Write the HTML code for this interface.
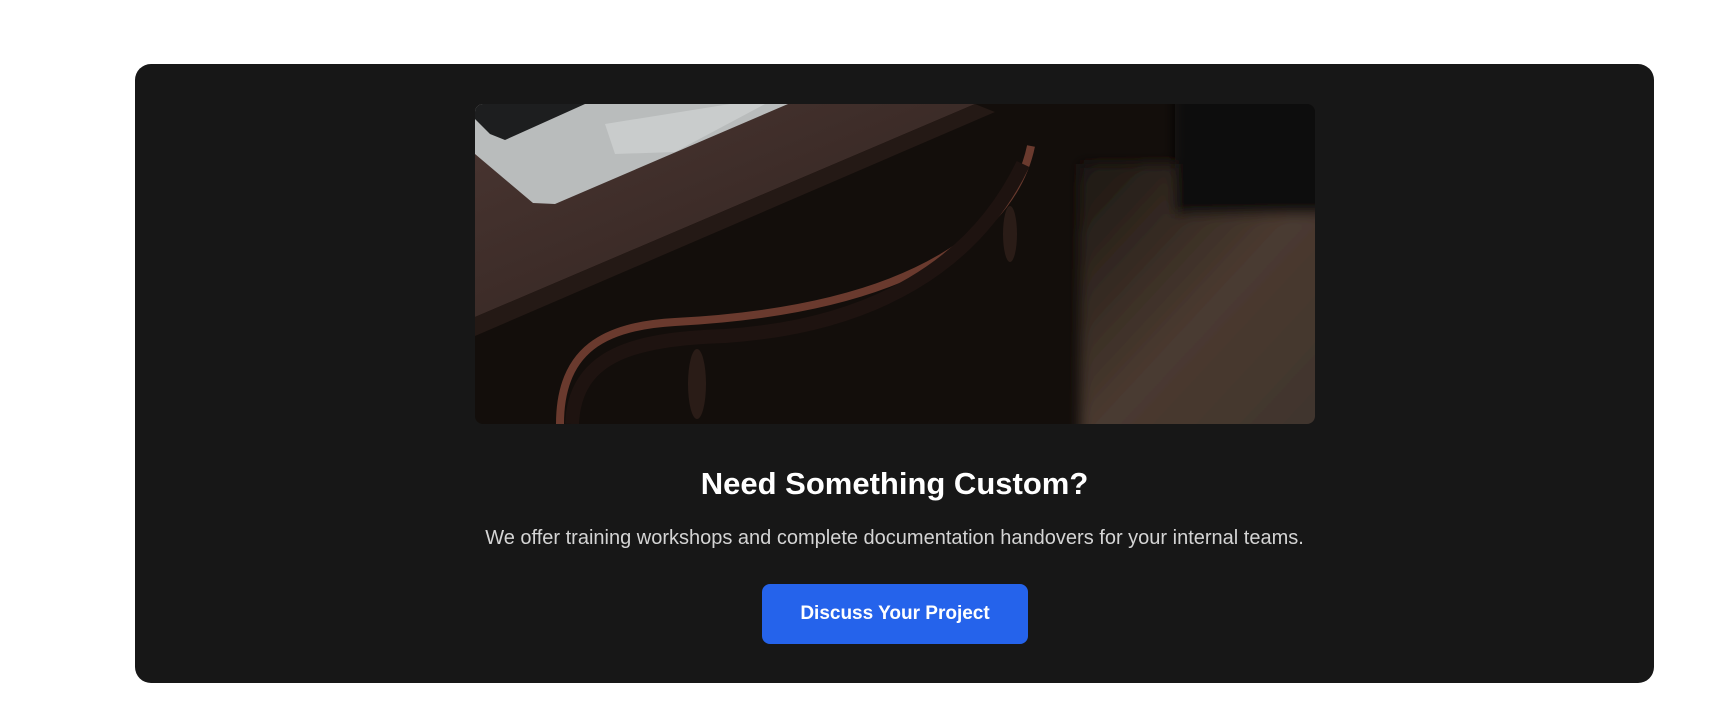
<!DOCTYPE html>
<html><head><meta charset="utf-8"><style>
html,body{margin:0;padding:0;background:#fff;width:1716px;height:702px;overflow:hidden;font-family:"Liberation Sans",sans-serif}
.card{position:absolute;left:135px;top:64px;width:1519px;height:619px;background:#171717;border-radius:16px}
.img{position:absolute;left:475px;top:104px;width:840px;height:320px;border-radius:8px;overflow:hidden}
h2{position:absolute;left:135px;width:1519px;top:466px;margin:0;text-align:center;color:#fff;font-size:31px;font-weight:bold;line-height:36px}
p{position:absolute;left:135px;width:1519px;top:526px;margin:0;text-align:center;color:#d4d4d4;font-size:20px;line-height:24px}
.btn{position:absolute;left:762px;top:584px;width:266px;height:60px;background:#2563eb;border-radius:8px;color:#fff;font-weight:bold;font-size:19px;line-height:60px;text-align:center}
</style></head><body>
<div class="card"></div>
<div class="img"><svg width="840" height="320" viewBox="0 0 840 320" preserveAspectRatio="none">
<defs>
<linearGradient id="fl" x1="0" y1="0" x2="1" y2="1"><stop offset="0" stop-color="#1c1712"/><stop offset="0.5" stop-color="#4a3a30"/><stop offset="1" stop-color="#3e342c"/></linearGradient>
<linearGradient id="dk" x1="0" y1="0" x2="1" y2="1"><stop offset="0" stop-color="#4a3632"/><stop offset="1" stop-color="#2e211d"/></linearGradient>
<filter id="b"><feGaussianBlur stdDeviation="6"/></filter>
</defs>
<rect width="840" height="320" fill="#130e0b"/>
<g filter="url(#b)">
<rect x="605" y="60" width="260" height="280" fill="url(#fl)"/>
<rect x="700" y="-20" width="160" height="130" fill="#0e0d0a"/>
</g>
<polygon points="0,0 500,0 0,213" fill="url(#dk)"/>
<polygon points="0,213 500,0 520,8 0,232" fill="#241915"/>
<polygon points="0,0 313,0 80,100 58,99 0,50" fill="#b9bcbc"/>
<polygon points="130,20 255,0 290,0 200,48 140,50" fill="#c9cccc"/>
<polygon points="0,0 110,0 30,36 15,30 0,15" fill="#1d1e1f"/>
<path d="M556,42 C540,120 450,205 200,218 C130,222 85,245 85,320" stroke="#6a3a2e" stroke-width="8" fill="none"/>
<path d="M97,320 C100,250 160,235 250,232 C400,222 500,160 548,60" stroke="#1e1310" stroke-width="14" fill="none"/>
<ellipse cx="222" cy="280" rx="9" ry="35" fill="#2a1c17"/>
<ellipse cx="535" cy="130" rx="7" ry="28" fill="#2a1c17"/>
</svg></div>
<h2>Need Something Custom?</h2>
<p>We offer training workshops and complete documentation handovers for your internal teams.</p>
<div class="btn">Discuss Your Project</div>
</body></html>
